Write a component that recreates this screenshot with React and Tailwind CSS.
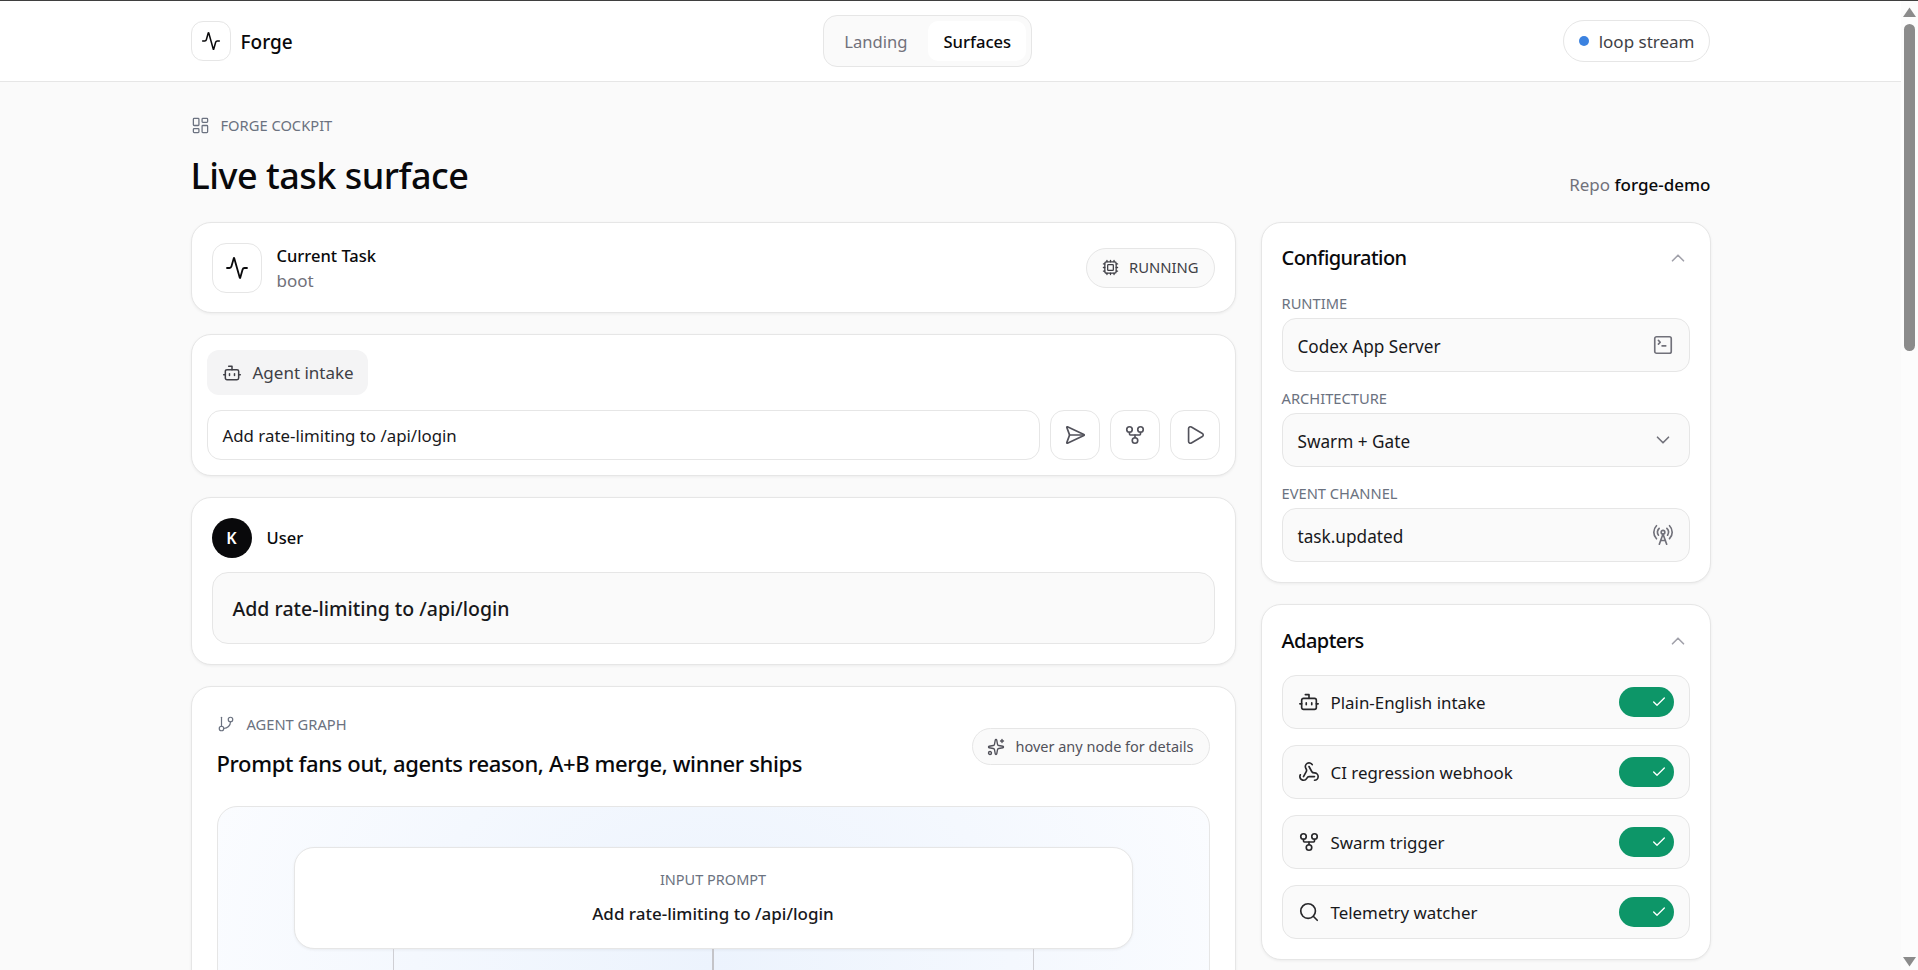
import React from 'react';
import {
  Activity,
  Bot,
  Check,
  ChevronDown,
  ChevronUp,
  Cpu,
  GitBranch,
  GitFork,
  LayoutDashboard,
  Play,
  RadioTower,
  Search,
  SendHorizontal,
  Sparkles,
  SquareTerminal,
  Webhook,
} from 'lucide-react';

const adapters = [
  { label: 'Plain-English intake', icon: Bot },
  { label: 'CI regression webhook', icon: Webhook },
  { label: 'Swarm trigger', icon: GitFork },
  { label: 'Telemetry watcher', icon: Search },
];

const Card = ({ className = '', children }) => (
  <section className={`rounded-[20px] border border-[#e6e6e6] bg-white shadow-[0_1px_3px_rgba(0,0,0,0.06)] ${className}`}>
    {children}
  </section>
);

const Field = ({ label, value, icon: Icon }) => (
  <div>
    <div className="mb-[5px] text-[14.7px] leading-[20px] text-[#6b7280]">{label}</div>
    <div className="flex h-[54px] items-center justify-between rounded-[14px] border border-[#e6e6e6] bg-[#fafafa] pl-[15px] pr-[15px]">
      <span className="pt-[4px] text-[17.2px] text-[#18181b]">{value}</span>
      <Icon className="h-[22px] w-[22px] text-[#71717a]" strokeWidth={1.8} />
    </div>
  </div>
);

const IconButton = ({ icon: Icon }) => (
  <button className="flex h-[50px] w-[50px] items-center justify-center rounded-[14px] border border-[#e6e6e6] bg-white text-[#52525b]">
    <Icon className="h-[22px] w-[22px]" strokeWidth={1.8} />
  </button>
);

const Scrollbar = () => (
  <div className="flex h-full w-[17px] shrink-0 flex-col items-center bg-[#fcfcfc]">
    <svg className="mt-[6px] shrink-0" width="13" height="10" viewBox="0 0 13 10">
      <path d="M6.5 0.5 L13 10 H0 Z" fill="#8b8b8b" />
    </svg>
    <div className="mt-[7px] h-[327px] w-[11px] rounded-full bg-[#8b8b8b]" />
    <svg className="mt-auto mb-[3px] shrink-0" width="13" height="10" viewBox="0 0 13 10">
      <path d="M0 0 H13 L6.5 9.5 Z" fill="#8b8b8b" />
    </svg>
  </div>
);

const App = () => {
  return (
    <div className="flex h-screen overflow-hidden border-t border-[#3f3f3f] bg-[#fafafa] font-['Noto_Sans',sans-serif] text-[#09090b]">
      <div className="min-w-0 flex-1 overflow-hidden">
        <header className="h-[81px] border-b border-[#e6e6e6] bg-white">
          <div className="mx-auto flex h-full w-[1520px] items-center justify-between">
            <div className="flex items-center gap-[10px]">
              <div className="flex h-[40px] w-[40px] items-center justify-center rounded-[12px] border border-[#e6e6e6] bg-white">
                <Activity className="h-[20px] w-[20px]" strokeWidth={1.8} />
              </div>
              <span className="pt-[2px] text-[19px] font-medium">Forge</span>
            </div>
            <nav className="flex h-[52px] items-center gap-[6px] rounded-[14px] border border-[#e6e6e6] bg-[#fafafa] pl-[5px] pr-[5px]">
              <span className="px-[15px] pt-[2px] text-[16.6px] text-[#71717a]">Landing</span>
              <span className="flex h-[40px] items-center rounded-[10px] bg-white px-[15px] pt-[2px] text-[16.6px] font-medium">Surfaces</span>
            </nav>
            <div className="flex h-[42px] items-center gap-[10px] rounded-full border border-[#e6e6e6] bg-white pl-[15px] pr-[15px]">
              <span className="h-[10px] w-[10px] rounded-full bg-[#3b82e0]" />
              <span className="pt-[2px] text-[17px] text-[#3f3f46]">loop stream</span>
            </div>
          </div>
        </header>

        <main className="mx-auto w-[1520px] pt-[32px]">
          <div className="flex items-center gap-[11px] text-[14.7px] text-[#6b7280]">
            <LayoutDashboard className="h-[19px] w-[19px]" strokeWidth={1.6} />
            <span>FORGE COCKPIT</span>
          </div>
          <div className="mt-[16px] flex items-end justify-between">
            <h1 className="text-[36px] font-medium leading-[48px] tracking-[-0.5px]">Live task surface</h1>
            <div className="mb-[3px] text-[17px] text-[#71717a]">
              Repo <span className="font-medium text-[#09090b]">forge-demo</span>
            </div>
          </div>

          <div className="mt-[22px] grid grid-cols-[1045px_450px] gap-[25px]">
            <div className="flex flex-col gap-[21px]">
              <Card className="flex h-[91px] items-center justify-between px-[20px]">
                <div className="flex items-center gap-[15px]">
                  <div className="flex h-[50px] w-[50px] items-center justify-center rounded-[14px] border border-[#e6e6e6] bg-white">
                    <Activity className="h-[24px] w-[24px]" strokeWidth={1.8} />
                  </div>
                  <div>
                    <div className="text-[16.5px] font-medium leading-[25px]">Current Task</div>
                    <div className="text-[17px] leading-[25px] text-[#71717a]">boot</div>
                  </div>
                </div>
                <div className="flex h-[40px] items-center gap-[10px] rounded-full border border-[#e6e6e6] bg-[#fafafa] pl-[15px] pr-[15px] text-[#3f3f46]">
                  <Cpu className="h-[17px] w-[17px]" strokeWidth={1.8} />
                  <span className="text-[14.8px]">RUNNING</span>
                </div>
              </Card>

              <Card className="h-[142px] px-[15px] pt-[15px]">
                <div className="inline-flex h-[45px] items-center gap-[11px] rounded-[12px] bg-[#f4f4f5] pl-[15px] pr-[14px] text-[#3f3f46]">
                  <Bot className="h-[20px] w-[20px]" strokeWidth={1.8} />
                  <span className="text-[17px]">Agent intake</span>
                </div>
                <div className="mt-[15px] flex gap-[10px]">
                  <div className="flex h-[50px] flex-1 items-center rounded-[14px] border border-[#e6e6e6] bg-white px-[15px] pt-[2px] text-[16.85px] text-[#18181b]">
                    Add rate-limiting to /api/login
                  </div>
                  <IconButton icon={SendHorizontal} />
                  <IconButton icon={GitFork} />
                  <IconButton icon={Play} />
                </div>
              </Card>

              <Card className="h-[168px] px-[20px] pt-[20px]">
                <div className="flex items-center gap-[15px]">
                  <div className="flex h-[40px] w-[40px] items-center justify-center rounded-full bg-[#09090b] text-[16px] font-semibold text-white">K</div>
                  <span className="text-[16.5px] font-medium">User</span>
                </div>
                <div className="mt-[14px] flex h-[72px] items-center rounded-[16px] border border-[#e6e6e6] bg-[#fafafa] px-[20px] pt-[2px] text-[19.5px] font-medium text-[#18181b]">
                  Add rate-limiting to /api/login
                </div>
              </Card>

              <Card className="h-[600px] px-[25px] pt-[26px]">
                <div className="flex items-start justify-between">
                  <div>
                    <div className="flex items-center gap-[12px] text-[14.7px] text-[#6b7280]">
                      <GitBranch className="h-[18px] w-[18px]" strokeWidth={1.6} />
                      <span>AGENT GRAPH</span>
                    </div>
                    <h2 className="mt-[12px] text-[22px] font-medium leading-[32px] tracking-[-0.35px]">Prompt fans out, agents reason, A+B merge, winner ships</h2>
                  </div>
                  <div className="mt-[15px] flex h-[37px] items-center gap-[10px] rounded-full border border-[#e6e6e6] bg-[#fafafa] pl-[14px] pr-[15px] text-[#52525b]">
                    <Sparkles className="h-[18px] w-[18px]" strokeWidth={1.8} />
                    <span className="text-[14.5px]">hover any node for details</span>
                  </div>
                </div>
                <div className="mt-[27px] h-[500px] rounded-[20px] border border-[#e6e6e6] bg-[radial-gradient(ellipse_60%_100%_at_50%_32%,#ecf3fd,#fcfdff)] px-[76px] pt-[40px]">
                  <div className="flex h-[102px] flex-col items-center justify-center rounded-[20px] border border-[#e6e6e6] bg-white pb-[2px] shadow-[0_1px_3px_rgba(0,0,0,0.06)]">
                    <div className="text-[14.5px] leading-[20px] text-[#6b7280]">INPUT PROMPT</div>
                    <div className="mt-[13px] text-[17px] font-medium leading-[24px] text-[#18181b]">Add rate-limiting to /api/login</div>
                  </div>
                  <div className="mx-[99px] flex h-[40px] justify-between">
                    <div className="w-px bg-[#cfcfd4]" />
                    <div className="w-[2px] bg-[#c4c4c8]" />
                    <div className="w-px bg-[#cfcfd4]" />
                  </div>
                </div>
              </Card>
            </div>

            <div className="flex flex-col gap-[21px]">
              <Card className="h-[361px] px-[20px] pt-[19px]">
                <div className="flex items-center justify-between">
                  <h3 className="text-[20px] font-medium leading-[32px] tracking-[-0.55px]">Configuration</h3>
                  <ChevronUp className="mr-[1px] h-[22px] w-[22px] text-[#a1a1aa]" strokeWidth={1.8} />
                </div>
                <div className="mt-[19px] flex flex-col gap-[16px]">
                  <Field label="RUNTIME" value="Codex App Server" icon={SquareTerminal} />
                  <Field label="ARCHITECTURE" value="Swarm + Gate" icon={ChevronDown} />
                  <Field label="EVENT CHANNEL" value="task.updated" icon={RadioTower} />
                </div>
              </Card>

              <Card className="h-[356px] px-[20px] pt-[20px]">
                <div className="flex items-center justify-between">
                  <h3 className="text-[20px] font-medium leading-[32px] tracking-[-0.55px]">Adapters</h3>
                  <ChevronUp className="mr-[1px] h-[22px] w-[22px] text-[#a1a1aa]" strokeWidth={1.8} />
                </div>
                <div className="mt-[18px] flex flex-col gap-[16px]">
                  {adapters.map(({ label, icon: Icon }) => (
                    <div key={label} className="flex h-[54px] items-center justify-between rounded-[14px] border border-[#e6e6e6] bg-[#fafafa] pl-[15px] pr-[15px]">
                      <div className="flex items-center gap-[11px]">
                        <Icon className="h-[22px] w-[22px] text-[#27272a]" strokeWidth={1.8} />
                        <span className="pt-[2px] text-[16.9px] text-[#18181b]">{label}</span>
                      </div>
                      <div className="flex h-[30px] w-[55px] items-center justify-end rounded-full bg-[#0d9668] pr-[7px]">
                        <Check className="h-[16px] w-[16px] text-white" strokeWidth={2} />
                      </div>
                    </div>
                  ))}
                </div>
              </Card>
            </div>
          </div>
        </main>
      </div>
      <Scrollbar />
    </div>
  );
};

export default App;
